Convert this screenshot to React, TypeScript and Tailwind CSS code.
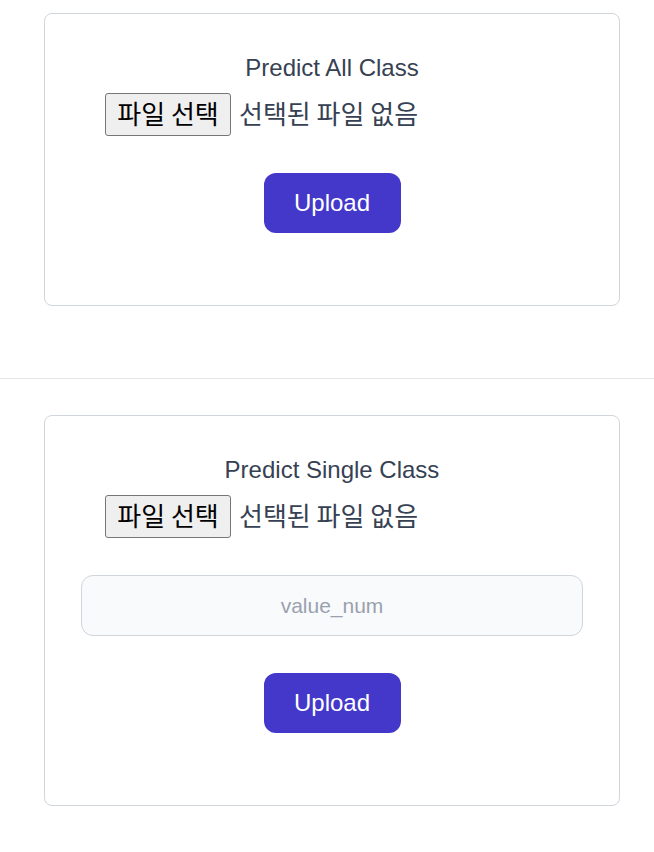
import React from "react";

const FONT = {
  fontFamily: '"Liberation Sans", "Noto Sans CJK KR", Arial, sans-serif',
};
const KFONT = {
  fontFamily: '"Noto Sans CJK KR", "Liberation Sans", sans-serif',
};

function FileRow() {
  return (
    <label className="flex h-[44px] items-center pl-6">
      <input type="file" className="sr-only" />
      <span
        className="flex h-[43px] w-[126px] items-center justify-center rounded-[3px] border border-[#767676] bg-[#efefef] pb-[2px] text-[26px] leading-none text-black"
        style={KFONT}
      >
        파일 선택
      </span>
      <span className="ml-2 pb-[3px] text-[26px] leading-none text-gray-700" style={KFONT}>
        선택된 파일 없음
      </span>
    </label>
  );
}

function UploadBtn() {
  return (
    <div className="flex justify-center">
      <button
        type="button"
        className="h-[60px] w-[137px] rounded-xl bg-[#4338ca] text-2xl text-white"
      >
        Upload
      </button>
    </div>
  );
}

export default function App() {
  return (
    <div className="min-h-[852px] bg-white" style={FONT}>
      <div className="pt-[13px] pb-[72px]">
        <div className="ml-[44px] w-[576px] rounded-lg border border-gray-300 px-9 pt-[38px] pb-[72px]">
          <h2 className="text-center text-2xl leading-8 text-gray-700">Predict All Class</h2>
          <div className="mt-2">
            <FileRow />
          </div>
          <div className="mt-[37px]">
            <UploadBtn />
          </div>
        </div>
      </div>
      <hr className="border-gray-200" />
      <div className="pt-[36px] pb-10">
        <div className="ml-[44px] w-[576px] rounded-lg border border-gray-300 px-9 pt-[38px] pb-[72px]">
          <h2 className="text-center text-2xl leading-8 text-gray-700">Predict Single Class</h2>
          <div className="mt-2">
            <FileRow />
          </div>
          <input
            type="text"
            placeholder="value_num"
            className="mt-[37px] block h-[61px] w-full rounded-xl border border-gray-300 bg-gray-50 text-center text-[21px] text-gray-700 placeholder:text-gray-400"
          />
          <div className="mt-[37px]">
            <UploadBtn />
          </div>
        </div>
      </div>
    </div>
  );
}
